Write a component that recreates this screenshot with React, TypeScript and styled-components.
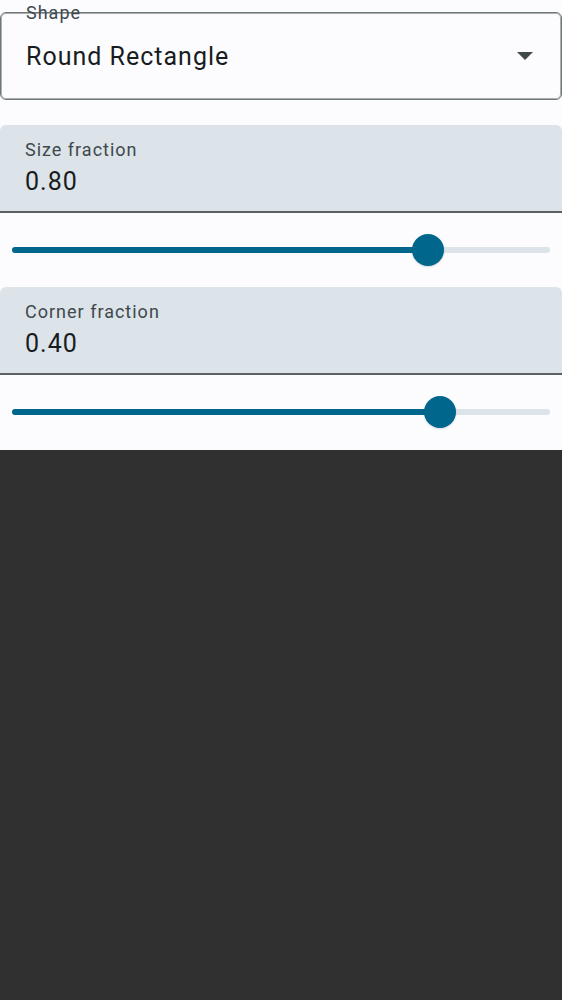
import React, { useState } from "react";
import styled, { createGlobalStyle } from "styled-components";

const GlobalStyle = createGlobalStyle`
  * { box-sizing: border-box; }
  body {
    margin: 0;
    background: #303030;
    font-family: Roboto, "Liberation Sans", sans-serif;
    color: #191c1e;
  }
`;

const Panel = styled.main`
  background: #fcfcff;
  padding: 12px 0 1px;
`;

const SelectField = styled.div`
  display: grid;
  height: 88px;
  margin-bottom: 25px;
  border: 1px solid #70787d;
  border-radius: 6px;
  box-shadow: inset 0 0 0 1px #a9aeb2;
  position: relative;
`;

const Label = styled.label`
  font-size: 18px;
  line-height: 25px;
  letter-spacing: 1px;
  color: #40484c;
`;

const FloatingLabel = styled(Label)`
  position: absolute;
  top: -13px;
  left: 25px;
`;

const Select = styled.select`
  grid-area: 1 / 1;
  width: 100%;
  padding: 0 60px 0 25px;
  border: 0;
  outline: 0;
  background: transparent;
  appearance: none;
  font: inherit;
  font-size: 25px;
  letter-spacing: 1px;
  color: inherit;
`;

const Arrow = styled.svg`
  grid-area: 1 / 1;
  place-self: center end;
  margin-right: 28px;
  pointer-events: none;
`;

const FilledField = styled.div`
  display: flex;
  flex-direction: column;
  height: 88px;
  padding: 12px 25px 0;
  background: #dce3e9;
  border-bottom: 2px solid #5a6165;
  border-radius: 6px 6px 0 0;
`;

const Input = styled.input`
  width: 100%;
  height: 38px;
  padding: 0;
  border: 0;
  outline: 0;
  background: transparent;
  font: inherit;
  font-size: 25px;
  letter-spacing: 1px;
  color: inherit;
`;

const SliderRow = styled.div`
  display: grid;
  align-items: center;
  height: 74px;
`;

const Rail = styled.div`
  grid-area: 1 / 1;
  height: 6px;
  margin: 0 12px;
  border-radius: 3px;
  background: #dce3e9;
`;

const Fill = styled.div`
  height: 100%;
  border-radius: 3px;
  background: #00668b;
`;

const Range = styled.input`
  grid-area: 1 / 1;
  width: 100%;
  height: 32px;
  margin: 0;
  background: transparent;
  appearance: none;
  outline: 0;

  &::-webkit-slider-thumb {
    appearance: none;
    width: 32px;
    height: 32px;
    border-radius: 50%;
    background: #00668b;
    box-shadow: 0 1px 2px rgba(0, 0, 0, 0.15);
  }
`;

type FractionProps = {
  id: string;
  label: string;
  min: number;
  max: number;
  initial: number;
};

function FractionControl({ id, label, min, max, initial }: FractionProps) {
  const [value, setValue] = useState(initial);
  const percent = ((value - min) / (max - min)) * 100;
  return (
    <>
      <FilledField>
        <Label htmlFor={id}>{label}</Label>
        <Input id={id} readOnly value={value.toFixed(2)} />
      </FilledField>
      <SliderRow>
        <Rail>
          <Fill style={{ width: `${percent}%` }} />
        </Rail>
        <Range
          type="range"
          aria-label={label}
          min={min}
          max={max}
          step={0.01}
          value={value}
          onChange={(e) => setValue(Number(e.target.value))}
        />
      </SliderRow>
    </>
  );
}

export default function App() {
  return (
    <>
      <GlobalStyle />
      <Panel>
        <SelectField>
          <FloatingLabel htmlFor="shape">Shape</FloatingLabel>
          <Select id="shape" defaultValue="Round Rectangle">
            <option>Round Rectangle</option>
            <option>Rectangle</option>
            <option>Circle</option>
          </Select>
          <Arrow width="16" height="8" viewBox="0 0 16 8" aria-hidden="true">
            <path d="M0 0h16L8 8z" fill="#40484c" />
          </Arrow>
        </SelectField>
        <FractionControl id="size" label="Size fraction" min={0.1} max={1} initial={0.8} />
        <FractionControl id="corner" label="Corner fraction" min={0} max={0.5} initial={0.4} />
      </Panel>
    </>
  );
}
